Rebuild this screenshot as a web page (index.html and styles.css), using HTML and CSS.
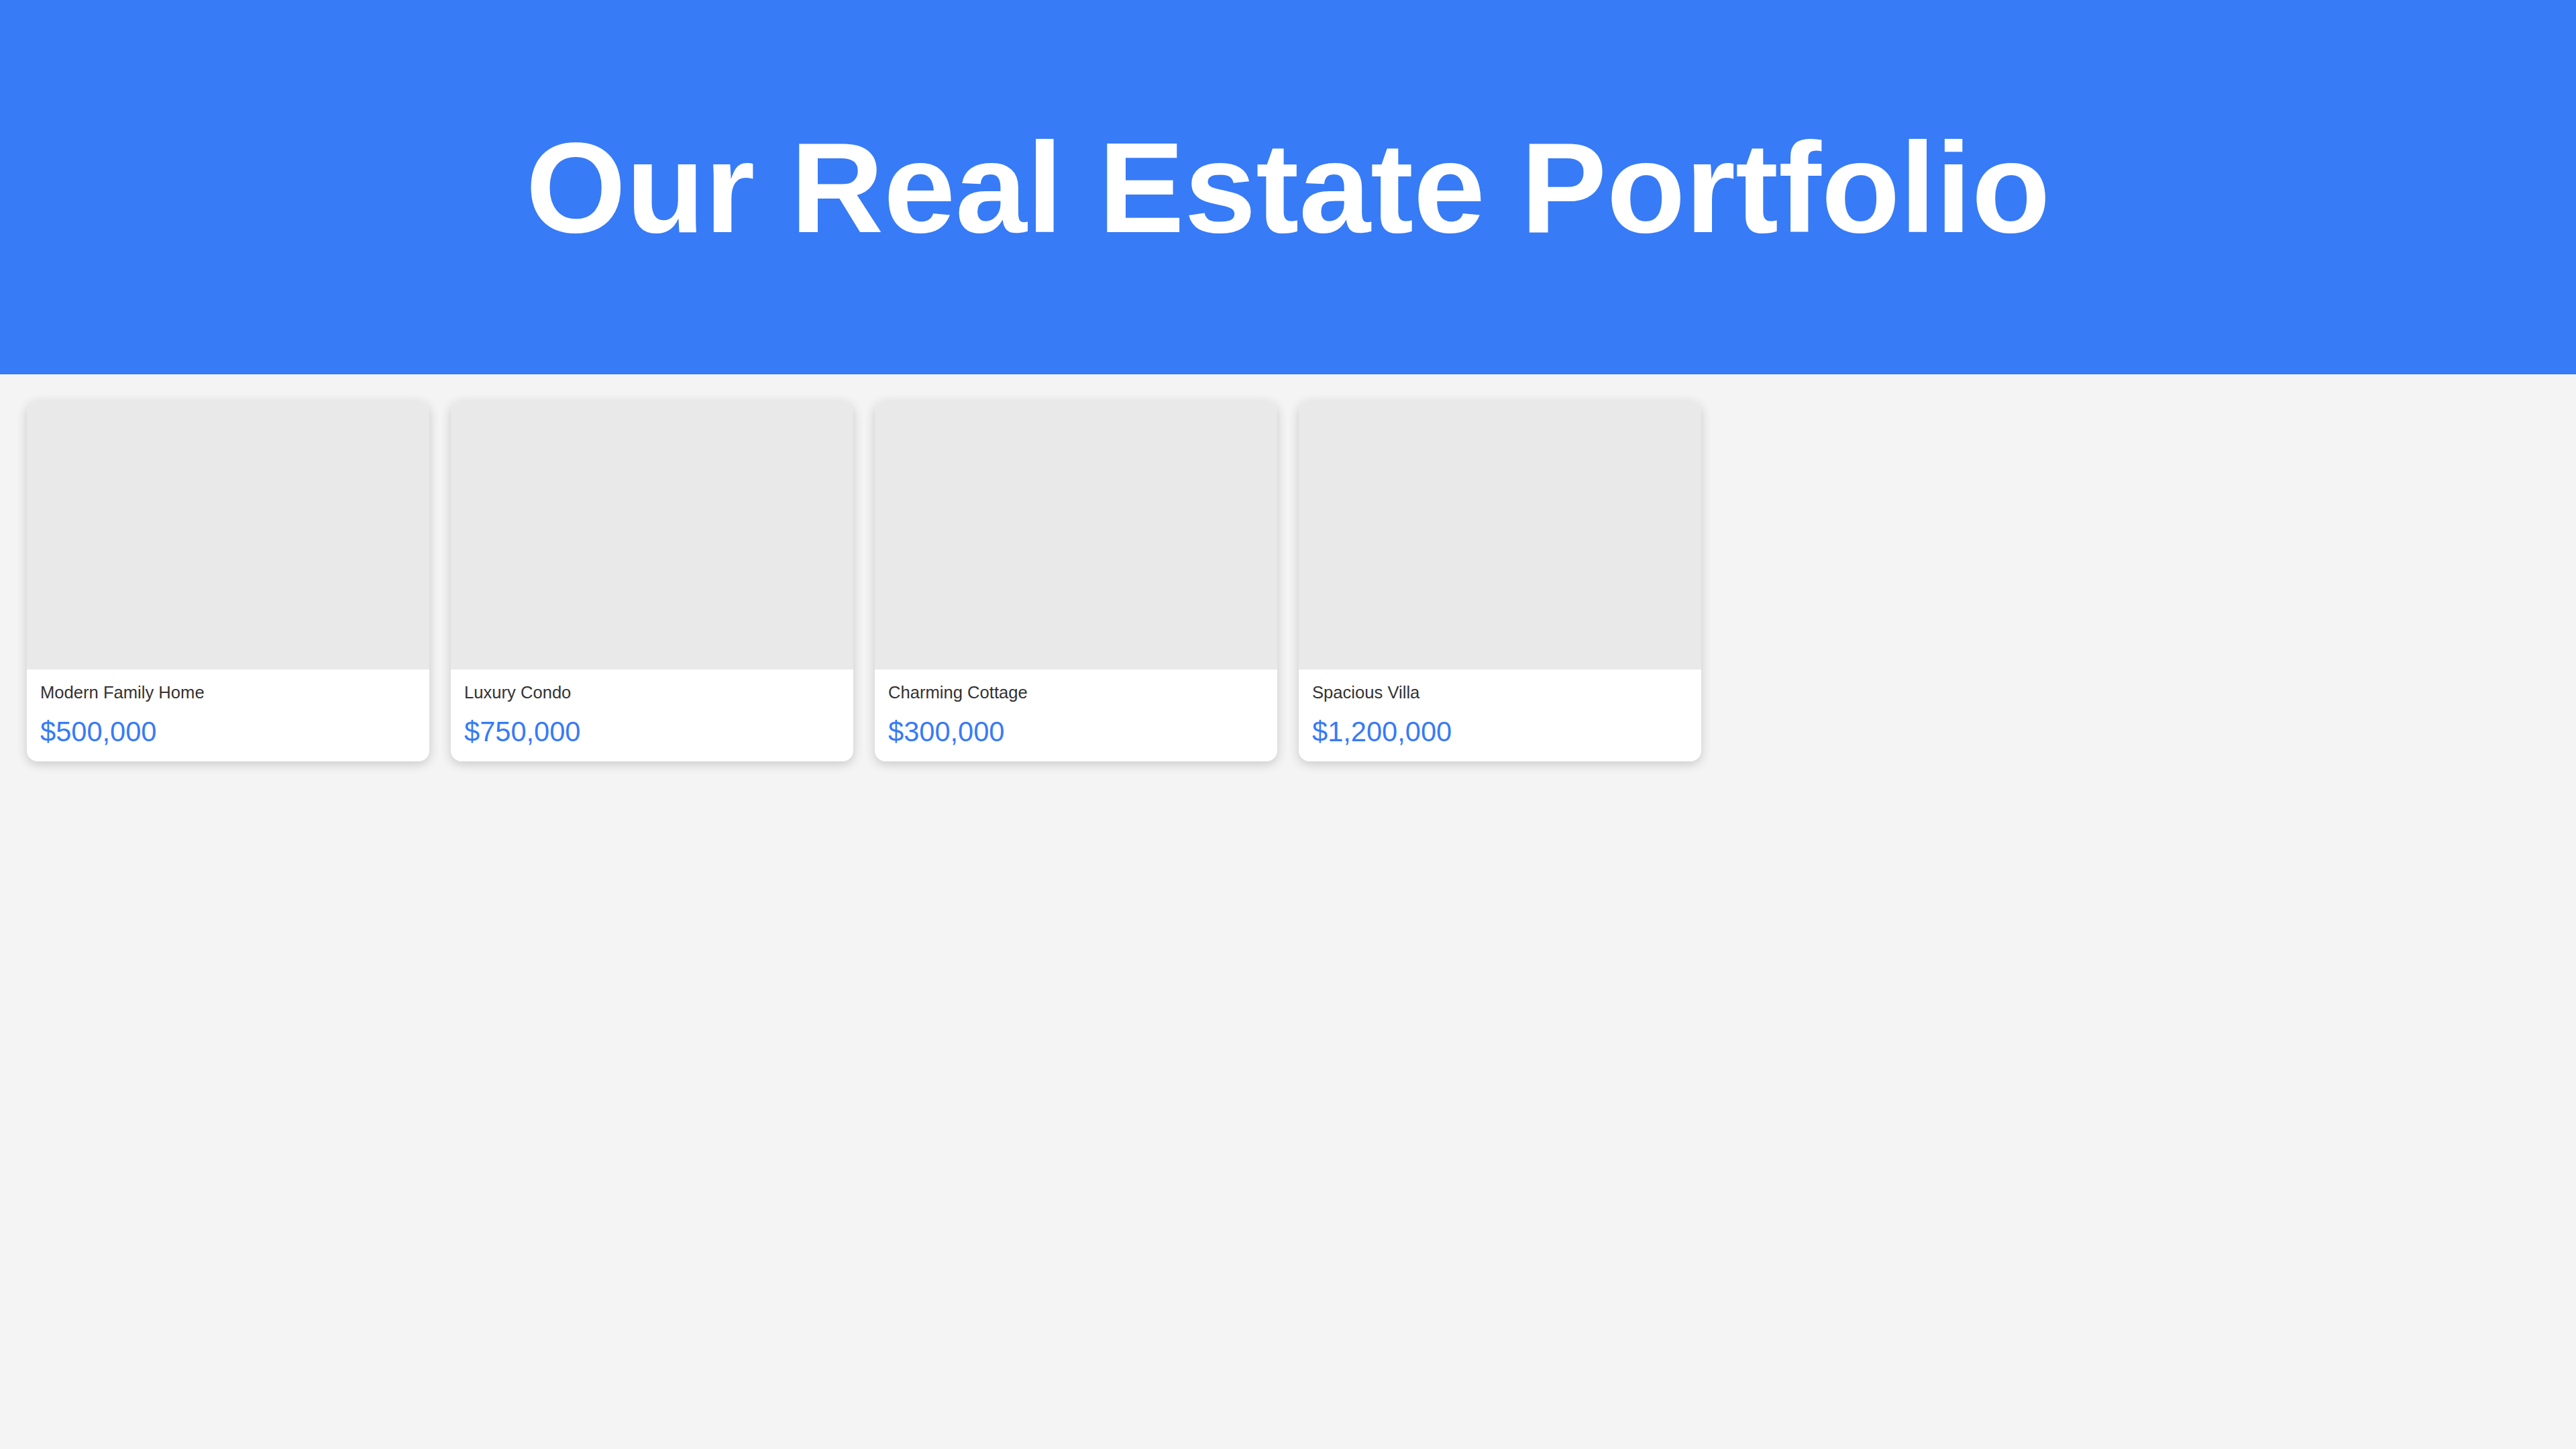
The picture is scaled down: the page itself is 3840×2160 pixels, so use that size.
FILE: index.html
```html
<!DOCTYPE html>
<html lang="en">
<head>
<meta charset="utf-8">
<title>Our Real Estate Portfolio</title>
<link rel="stylesheet" href="styles.css">
</head>
<body>
<header class="hero">
  <h1 class="hero-title">Our Real Estate Portfolio</h1>
</header>
<main class="listings">
  <article class="card">
    <div class="card-image"></div>
    <div class="card-body">
      <h3 class="card-name">Modern Family Home</h3>
      <p class="card-price">$500,000</p>
    </div>
  </article>
  <article class="card">
    <div class="card-image"></div>
    <div class="card-body">
      <h3 class="card-name">Luxury Condo</h3>
      <p class="card-price">$750,000</p>
    </div>
  </article>
  <article class="card">
    <div class="card-image"></div>
    <div class="card-body">
      <h3 class="card-name">Charming Cottage</h3>
      <p class="card-price">$300,000</p>
    </div>
  </article>
  <article class="card">
    <div class="card-image"></div>
    <div class="card-body">
      <h3 class="card-name">Spacious Villa</h3>
      <p class="card-price">$1,200,000</p>
    </div>
  </article>
</main>
</body>
</html>
```
FILE: styles.css
```css
html, body {
  margin: 0;
  padding: 0;
}

body {
  background: #f4f4f4;
  font-family: "Liberation Sans", Arial, sans-serif;
  color: #333333;
}

.hero {
  background: #377bf6;
  padding: 40px;
  text-align: center;
}

.hero-title {
  margin: 0.67em 0;
  font-size: 192px;
  font-weight: 700;
  color: #ffffff;
  line-height: normal;
}

.listings {
  display: grid;
  grid-template-columns: repeat(auto-fill, minmax(560px, 1fr));
  gap: 32px;
  padding: 40px;
  align-items: start;
}

.card {
  background: #ffffff;
  border-radius: 16px;
  overflow: hidden;
  box-shadow: 0 4px 16px rgba(0, 0, 0, 0.18);
}

.card-image {
  height: 400px;
  background: #e9e9e9;
}

.card-body {
  padding: 20px;
  display: flex;
  flex-direction: column;
  gap: 20px;
}

.card-name {
  margin: 0;
  font-size: 25.6px;
  font-weight: 400;
  line-height: normal;
  color: #333333;
}

.card-price {
  margin: 0;
  font-size: 41.6px;
  line-height: normal;
  color: #377bf6;
}
```
